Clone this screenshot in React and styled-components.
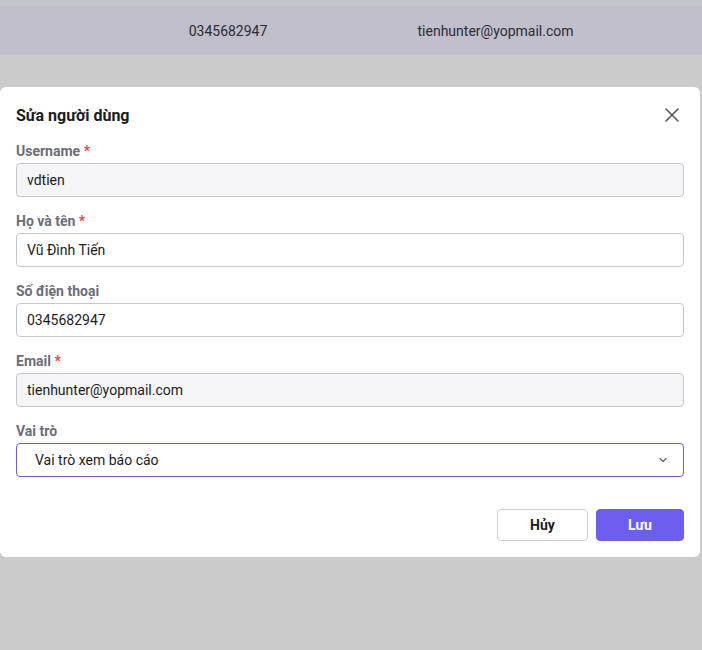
import { createGlobalStyle, styled } from "styled-components";

const Global = createGlobalStyle`
    html, body {
        margin: 0;
        padding: 0;
        background: #cbcbcb;
        font-family: Roboto, "Noto Sans", sans-serif;
    }
    * { box-sizing: border-box; }
`

const Page = styled.div`
    width: 702px;
    height: 650px;
    background: #cbcbcb;
    position: relative;
    overflow: hidden;
`

const TopStrip = styled.div`
    height: 7px;
    background: #c1c4c8;
`

const TableRow = styled.div`
    height: 48px;
    background: #c0bfcb;
    display: grid;
    grid-template-columns: 120px 216px 319px;
    align-items: center;
    font-size: 14px;
    color: #2b2b33;
`

const Cell = styled.div`
    text-align: center;
    white-space: nowrap;
`

const Modal = styled.div`
    position: absolute;
    top: 87px;
    left: 0;
    width: 700px;
    background: #fff;
    border-radius: 6px;
    padding: 16px;
`

const Header = styled.div`
    display: flex;
    justify-content: space-between;
    align-items: center;
    height: 24px;
    margin-bottom: 15px;
`

const Title = styled.h2`
    margin: 0;
    font-size: 16px;
    font-weight: 700;
    color: #1c1c1e;
`

const Close = styled.button`
    border: none;
    background: none;
    padding: 0;
    width: 18px;
    height: 18px;
    margin-right: 3px;
    display: flex;
    align-items: center;
    justify-content: center;
    cursor: pointer;
`

const Field = styled.div`
    margin-bottom: 15px;
`

const Label = styled.div`
    font-size: 14px;
    font-weight: 700;
    line-height: 18px;
    color: #6c6c7a;
    margin-bottom: 3px;
`

const Star = styled.span`
    color: #e5484d;
`

const Input = styled.input`
    width: 100%;
    height: 34px;
    padding: 0 10px;
    border: 1px solid #c6c6ce;
    border-radius: 4px;
    background: ${(p) => (p.disabled ? "#f5f5f7" : "#fff")};
    font-family: inherit;
    font-size: 14px;
    color: #1c1c1e;
    outline: none;
    &:disabled { color: #1c1c1e; -webkit-text-fill-color: #1c1c1e; opacity: 1; }
`

const Select = styled.div`
    height: 34px;
    border: 1px solid #6b5ce7;
    border-radius: 4px;
    display: flex;
    align-items: center;
    justify-content: space-between;
    padding: 0 14px 0 18px;
    font-size: 14px;
    color: #1c1c1e;
`

const Footer = styled.div`
    display: flex;
    justify-content: flex-end;
    gap: 8px;
    margin-top: 32px;
`

const Button = styled.button`
    height: 32px;
    width: ${(p) => p.$w}px;
    border-radius: 4px;
    font-family: inherit;
    font-size: 14px;
    font-weight: 700;
    cursor: pointer;
    border: 1px solid ${(p) => (p.$primary ? "#6c5ff0" : "#d0d0d6")};
    background: ${(p) => (p.$primary ? "#6c5ff0" : "#fff")};
    color: ${(p) => (p.$primary ? "#fff" : "#1c1c1e")};
`

const App = () => {
    return (
        <Page>
            <Global />
            <TopStrip />
            <TableRow>
                <Cell />
                <Cell>0345682947</Cell>
                <Cell>tienhunter@yopmail.com</Cell>
            </TableRow>
            <Modal>
                <Header>
                    <Title>Sửa người dùng</Title>
                    <Close>
                        <svg width="16" height="16" viewBox="0 0 16 16">
                            <path d="M2 2L14 14M14 2L2 14" stroke="#55555f" strokeWidth="1.6" strokeLinecap="round" />
                        </svg>
                    </Close>
                </Header>
                <Field>
                    <Label>Username <Star>*</Star></Label>
                    <Input disabled value="vdtien" readOnly />
                </Field>
                <Field>
                    <Label>Họ và tên <Star>*</Star></Label>
                    <Input value="Vũ Đình Tiến" readOnly />
                </Field>
                <Field>
                    <Label>Số điện thoại</Label>
                    <Input value="0345682947" readOnly />
                </Field>
                <Field>
                    <Label>Email <Star>*</Star></Label>
                    <Input disabled value="tienhunter@yopmail.com" readOnly />
                </Field>
                <Field>
                    <Label>Vai trò</Label>
                    <Select>
                        <span>Vai trò xem báo cáo</span>
                        <svg width="12" height="12" viewBox="0 0 12 12">
                            <path d="M3 4.5L6 7.5L9 4.5" stroke="#6c6c7a" strokeWidth="1.4" fill="none" strokeLinecap="round" strokeLinejoin="round" />
                        </svg>
                    </Select>
                </Field>
                <Footer>
                    <Button $w={91}>Hủy</Button>
                    <Button $w={88} $primary>Lưu</Button>
                </Footer>
            </Modal>
        </Page>
    );
};

export default App;
